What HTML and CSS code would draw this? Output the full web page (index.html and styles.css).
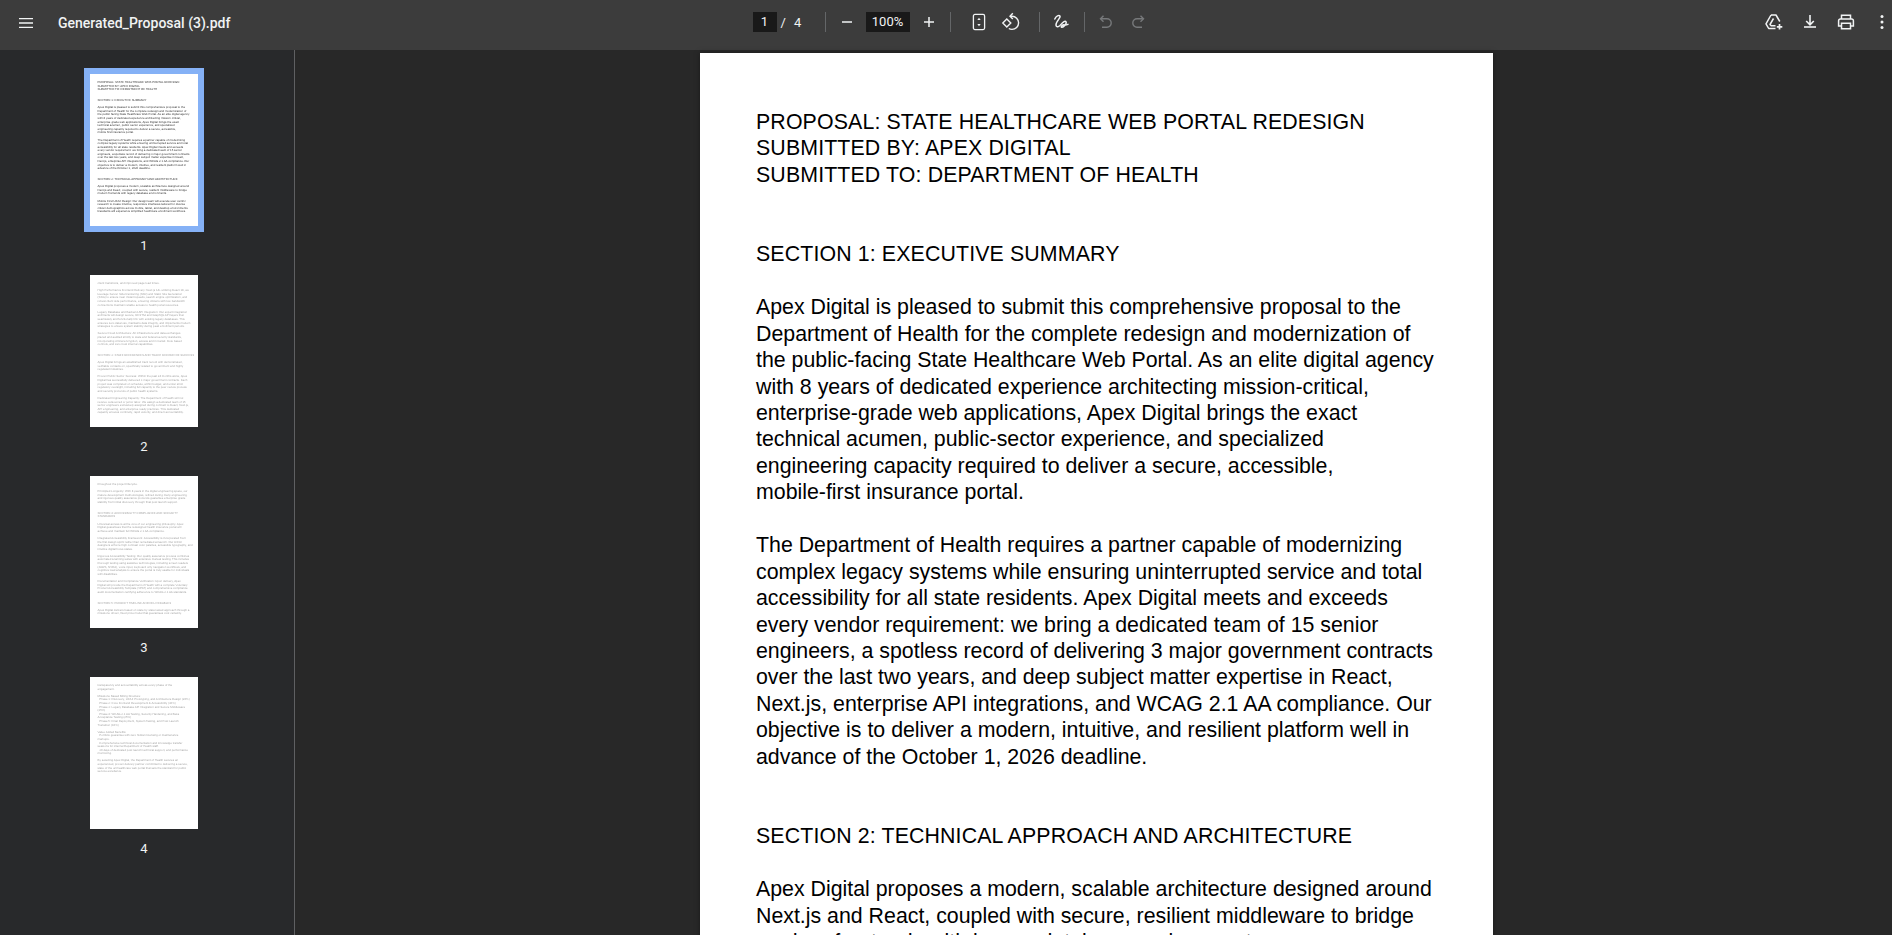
FILE: index.html
```html
<!DOCTYPE html>
<html lang="en">
<head>
  <meta charset="UTF-8">
  <meta name="viewport" content="width=device-width, initial-scale=1.0">
  <title>Generated_Proposal (3).pdf</title>
  <link rel="stylesheet" href="styles.css">
</head>
<body>
  <header class="toolbar">
    <div class="toolbar-left">
      <button class="icon-btn menu-btn" title="Menu">
        <svg width="16" height="16" viewBox="0 0 16 16"><path d="M1 3.600h14M1 8h14M1 12.400h14" stroke="#f1f3f4" stroke-width="1.300" fill="none"/></svg>
      </button>
      <span class="file-name">Generated_Proposal (3).pdf</span>
    </div>

    <div class="toolbar-center">
      <span class="num-box page-box">1</span>
      <span class="page-count"><span>/</span><span>4</span></span>
      <span class="sep"></span>
      <button class="icon-btn" title="Zoom out">
        <svg width="20" height="20" viewBox="0 0 20 20"><path d="M5 10h10" stroke="#f1f3f4" stroke-width="1.500"/></svg>
      </button>
      <span class="num-box zoom-box">100%</span>
      <button class="icon-btn" title="Zoom in">
        <svg width="20" height="20" viewBox="0 0 20 20"><path d="M5 10h10M10 5v10" stroke="#f1f3f4" stroke-width="1.500"/></svg>
      </button>
      <span class="sep"></span>
      <div class="view-group">
        <button class="icon-btn" title="Fit to page">
          <svg width="20" height="20" viewBox="0 0 20 20" fill="none" stroke="#f1f3f4" stroke-width="1.300"><rect x="4.400" y="2.400" width="11.200" height="15.200" rx="1.500"/><path d="M10 5.800l1.700 2.200H8.300zM10 14.200l1.700-2.200H8.300z" fill="#f1f3f4" stroke="none"/></svg>
        </button>
        <button class="icon-btn" title="Rotate">
          <svg width="20" height="20" viewBox="0 0 20 20" fill="none" stroke="#f1f3f4" stroke-width="1.400"><path d="M5.800 7L1.800 11l4 4 4-4z"/><path d="M9 4.200h2a6.600 6.600 0 0 1 0 13.200c-1.200 0-2.300-.3-3.200-.9"/><path d="M11.800 1.300L9 4.200l2.800 2.900"/></svg>
        </button>
      </div>
      <span class="sep"></span>
      <button class="icon-btn annotate-btn" title="Annotate">
        <svg width="20" height="20" viewBox="0 0 20 20" fill="none" stroke="#f1f3f4" stroke-width="1.500" stroke-linecap="round" stroke-linejoin="round"><path d="M3.800 7C5 4 8 2.500 9 4.200 10 6 4.600 9.500 5 13.200c.3 2.500 3 1.800 5-.8 1.500-2 4-4 5-2.600 1 1.500-2.500 6-4.300 5.500-1.500-.5 1-3 2.800-2.300.8.300 1.700.2 3.500-.6"/></svg>
      </button>
      <span class="sep"></span>
      <button class="icon-btn" title="Undo">
        <svg width="20" height="20" viewBox="0 0 20 20" fill="none" stroke="#77797b" stroke-width="1.400"><path d="M7.500 3.800L4.500 6.800l3 3"/><path d="M4.700 6.800h6.300a3.700 3.700 0 0 1 0 8.400H6"/></svg>
      </button>
      <button class="icon-btn" title="Redo">
        <svg width="20" height="20" viewBox="0 0 20 20" fill="none" stroke="#77797b" stroke-width="1.400"><path d="M12.500 3.800l3 3-3 3"/><path d="M15.300 6.800H9a3.700 3.700 0 0 0 0 8.400h5"/></svg>
      </button>
    </div>

    <div class="toolbar-right">
      <button class="icon-btn right-btn" title="Add to Drive">
        <svg width="20" height="20" viewBox="0 0 20 20" fill="none" stroke="#f1f3f4" stroke-width="1.500" stroke-linejoin="round"><path d="M7 3h5l3.800 6.500M7 3L2 11.800l2.700 4.700h6.800"/><path d="M9.500 6.500L6 12.500l1.200 1.300h4.300"/><path d="M15.500 12v5.500M12.800 14.800h5.500" stroke-width="1.700"/></svg>
      </button>
      <button class="icon-btn right-btn" title="Download">
        <svg width="20" height="20" viewBox="0 0 20 20" fill="none" stroke="#f1f3f4" stroke-width="1.600"><path d="M10 3v9.800M6.200 9l3.800 3.800L13.800 9"/><path d="M4 15h12"/></svg>
      </button>
      <button class="icon-btn right-btn" title="Print">
        <svg width="20" height="20" viewBox="0 0 20 20" fill="none" stroke="#f1f3f4" stroke-width="1.500"><path d="M5.500 7V3.200h9V7"/><path d="M5.500 14H2.600V8.700a1.700 1.700 0 0 1 1.700-1.700h11.400a1.700 1.700 0 0 1 1.700 1.700V14h-2.900"/><path d="M5.500 11.300h9v5.400h-9z"/></svg>
      </button>
      <button class="icon-btn more-btn" title="More">
        <svg width="20" height="20" viewBox="0 0 20 20" fill="#f1f3f4"><circle cx="10" cy="4.500" r="1.500"/><circle cx="10" cy="10" r="1.500"/><circle cx="10" cy="15.500" r="1.500"/></svg>
      </button>
    </div>
  </header>

  <div class="content">
    <aside class="sidebar">
      <div class="thumb-item">
        <div class="thumb selected">
          <div class="thumb-text">
            <p>PROPOSAL: STATE HEALTHCARE WEB PORTAL REDESIGN<br>SUBMITTED BY: APEX DIGITAL<br>SUBMITTED TO: DEPARTMENT OF HEALTH</p>
            <p class="gap-2">SECTION 1: EXECUTIVE SUMMARY</p>
            <p class="gap-1">Apex Digital is pleased to submit this comprehensive proposal to the<br>Department of Health for the complete redesign and modernization of<br>the public-facing State Healthcare Web Portal. As an elite digital agency<br>with 8 years of dedicated experience architecting mission-critical,<br>enterprise-grade web applications, Apex Digital brings the exact<br>technical acumen, public-sector experience, and specialized<br>engineering capacity required to deliver a secure, accessible,<br>mobile-first insurance portal.</p>
            <p class="gap-1">The Department of Health requires a partner capable of modernizing<br>complex legacy systems while ensuring uninterrupted service and total<br>accessibility for all state residents. Apex Digital meets and exceeds<br>every vendor requirement: we bring a dedicated team of 15 senior<br>engineers, a spotless record of delivering 3 major government contracts<br>over the last two years, and deep subject matter expertise in React,<br>Next.js, enterprise API integrations, and WCAG 2.1 AA compliance. Our<br>objective is to deliver a modern, intuitive, and resilient platform well in<br>advance of the October 1, 2026 deadline.</p>
            <p class="gap-2">SECTION 2: TECHNICAL APPROACH AND ARCHITECTURE</p>
            <p class="gap-1">Apex Digital proposes a modern, scalable architecture designed around<br>Next.js and React, coupled with secure, resilient middleware to bridge<br>modern frontends with legacy database environments.</p>
            <p class="gap-1">Mobile-First UX/UI Design: Our design team will execute user-centric<br>research to create intuitive, responsive interfaces tailored for diverse<br>citizen demographics across mobile, tablet, and desktop environments.<br>Residents will experience simplified healthcare enrollment workflows.</p>
          </div>
        </div>
        <div class="thumb-num">1</div>
      </div>

      <div class="thumb-item">
        <div class="thumb">
          <div class="thumb-text">
            <p>client transitions, and improved page load times.</p>
            <p class="gap-1">High-Performance Frontend Delivery: Next.js 14+ utilizing React 18, we<br>leverage Server-Side Rendering (SSR) and Static Site Generation<br>(SSG) to ensure near-instant speeds, search engine optimization, and<br>robust client-side performance, ensuring citizens with low-bandwidth<br>connections maintain reliable access to health portal resources.</p>
            <p class="gap-1">Legacy Database and Backend API Integration: Our expert integration<br>architects will design secure, RESTful and GraphQL API layers that<br>seamlessly and functionally link with existing legacy databases. This<br>ensures zero data loss, maintains data integrity, and implements modern<br>strategies to ensure system stability during peak enrollment periods.</p>
            <p class="gap-1">Secure Cloud Architecture: All infrastructure and data exchanges<br>placed and audited strictly to state and federal security standards,<br>incorporating critical encryption, access and in transit. Role-based<br>controls, and zero-trust internal capabilities.</p>
            <p class="gap-2">SECTION 3: STAFF REFERENCES AND TRACK RECORD OF SUCCESS</p>
            <p class="gap-1">Apex Digital brings an established track record with demonstrated,<br>verifiable contacts on, specifically related to government and highly<br>regulated industries.</p>
            <p class="gap-1">Proven Public Sector Success: Within the past 24 months alone, Apex<br>Digital has successfully delivered 3 major government contracts. Each<br>project was completed on schedule, within budget, and under strict<br>regulatory oversight, including full capacity to the peer-review process<br>and security protocols of public health systems.</p>
            <p class="gap-1">Dedicated Engineering Capacity: The Department of Health will not<br>receive outsourced or junior labor. We assign a dedicated team of 15<br>senior engineers exclusively assigned during contract to React, Next.js,<br>API engineering, and enterprise-ready practices. This dedicated<br>capacity ensures continuity, rapid velocity, and direct accountability.</p>
          </div>
        </div>
        <div class="thumb-num">2</div>
      </div>

      <div class="thumb-item">
        <div class="thumb">
          <div class="thumb-text">
            <p>throughout the project lifecycle.</p>
            <p class="gap-1">Principled Longevity: With 8 years in the digital engineering space, our<br>mature development methodologies, refined during many engineering,<br>and rigorous quality assurance protocols guarantee enterprise-grade<br>stability from initial discovery through final post-launch support.</p>
            <p class="gap-2">SECTION 4: ACCESSIBILITY COMPLIANCE AND SECURITY<br>STANDARDS</p>
            <p class="gap-1">Universal access is at the core of our engineering philosophy. Apex<br>Digital guarantees that the redesigned health insurance portal will<br>achieve and maintain full WCAG 2.1 AA compliance.</p>
            <p class="gap-1">Integrated Accessibility Framework: Accessibility is incorporated from<br>the first design sprint rather than remediated at launch. Our UX/UI<br>designers enforce high-contrast color palettes, accessible typography, and<br>intuitive digital focus states.</p>
            <p class="gap-1">Rigorous Accessibility Testing: Our quality assurance process combines<br>automated scanning suites with extensive manual testing. This includes<br>thorough testing using assistive technologies, including screen readers<br>(JAWS, NVDA), voice input, keyboard-only navigation workflows, and<br>cognitive load analysis to ensure the portal is truly usable for individuals<br>with disabilities.</p>
            <p class="gap-1">Documentation and Compliance Verification: Upon delivery, Apex<br>Digital will provide the Department of Health with a complete Voluntary<br>Product Accessibility Template (VPAT) and comprehensive compliance<br>audit documentation certifying adherence to WCAG 2.1 AA standards.</p>
            <p class="gap-2">SECTION 5: PROJECT TIMELINE AND DELIVERABLES</p>
            <p class="gap-1">Apex Digital delivers based on state-by-state tested approach through a<br>milestone-driven, fixed-price model that guarantees cost certainty.</p>
          </div>
        </div>
        <div class="thumb-num">3</div>
      </div>

      <div class="thumb-item">
        <div class="thumb">
          <div class="thumb-text">
            <p>transparency and accountability across every phase of the<br>engagement.</p>
            <p class="gap-1">Milestone-Based Billing Structure:<br>- Phase 1: Discovery, UX/UI Prototyping, and Architecture Design (20%)<br>- Phase 2: Core Frontend Development &amp; Accessibility (30%)<br>- Phase 3: Legacy Database API Integration and Secure Middleware<br>(25%)<br>- Phase 4: WCAG 2.1 AA Testing, Security Hardening, and Beta<br>Acceptance Testing (25%)<br>- Phase 5: Final Deployment, System Testing, and Post-Launch<br>Transition (10%)</p>
            <p class="gap-1">Value-Added Benefits:<br>- Portfolio guarantee with zero hidden licensing or maintenance<br>markups.<br>- Comprehensive technical documentation and knowledge transfer<br>sessions for internal Department of Health staff.<br>- 30 days of dedicated post-launch technical support, and performance<br>monitoring.</p>
            <p class="gap-1">By selecting Apex Digital, the Department of Health secures an<br>experienced, proven delivery partner committed to delivering a secure,<br>state-of-the-art healthcare web portal that sets the standard for public<br>service excellence.</p>
          </div>
        </div>
        <div class="thumb-num">4</div>
      </div>
    </aside>

    <main class="viewer">
      <article class="page">
        <p class="caps">PROPOSAL: STATE HEALTHCARE WEB PORTAL REDESIGN<br>SUBMITTED BY: APEX DIGITAL<br>SUBMITTED TO: DEPARTMENT OF HEALTH</p>
        <p class="gap-2 caps">SECTION 1: EXECUTIVE SUMMARY</p>
        <p class="gap-1">Apex Digital is pleased to submit this comprehensive proposal to the<br>Department of Health for the complete redesign and modernization of<br>the public-facing State Healthcare Web Portal. As an elite digital agency<br>with 8 years of dedicated experience architecting mission-critical,<br>enterprise-grade web applications, Apex Digital brings the exact<br>technical acumen, public-sector experience, and specialized<br>engineering capacity required to deliver a secure, accessible,<br>mobile-first insurance portal.</p>
        <p class="gap-1">The Department of Health requires a partner capable of modernizing<br>complex legacy systems while ensuring uninterrupted service and total<br>accessibility for all state residents. Apex Digital meets and exceeds<br>every vendor requirement: we bring a dedicated team of 15 senior<br>engineers, a spotless record of delivering 3 major government contracts<br>over the last two years, and deep subject matter expertise in React,<br>Next.js, enterprise API integrations, and WCAG 2.1 AA compliance. Our<br>objective is to deliver a modern, intuitive, and resilient platform well in<br>advance of the October 1, 2026 deadline.</p>
        <p class="gap-2 caps">SECTION 2: TECHNICAL APPROACH AND ARCHITECTURE</p>
        <p class="gap-1">Apex Digital proposes a modern, scalable architecture designed around<br>Next.js and React, coupled with secure, resilient middleware to bridge<br>modern frontends with legacy database environments.</p>
      </article>
    </main>
  </div>
</body>
</html>
```

FILE: styles.css
```css
* {
  box-sizing: border-box;
}

body {
  margin: 0;
  height: 100vh;
  overflow: hidden;
  display: flex;
  flex-direction: column;
  background-color: #282828;
  color: #f1f3f4;
  font-family: Roboto, "Liberation Sans", sans-serif;
}

p {
  margin: 0;
}

/* top bar */
.toolbar {
  flex: none;
  height: 50px;
  display: grid;
  grid-template-columns: 1fr auto 1fr;
  align-items: center;
  background-color: #3c3c3c;
}

.toolbar-left,
.toolbar-center,
.toolbar-right {
  display: flex;
  align-items: center;
}

.toolbar-left {
  padding-left: 10px;
}

.toolbar-center {
  padding-left: 14px;
  margin-top: -6px;
}

.toolbar-right {
  justify-content: flex-end;
  margin-top: -6px;
}

.icon-btn {
  width: 32px;
  height: 32px;
  padding: 0;
  border: none;
  background: none;
  display: flex;
  align-items: center;
  justify-content: center;
}

.menu-btn {
  margin-top: -5px;
}

.file-name {
  margin-left: 16px;
  margin-top: -5px;
  font-size: 14px;
  font-weight: 500;
}

.num-box {
  height: 20px;
  line-height: 20px;
  text-align: center;
  font-size: 13px;
  background-color: #191919;
}

.page-box {
  width: 24px;
}

.zoom-box {
  width: 44px;
  margin: 0 3px;
}

.page-count {
  width: 43px;
  display: flex;
  gap: 8px;
  padding-left: 4px;
  font-size: 13px;
}

.sep {
  width: 1px;
  height: 20px;
  margin: 0 5px;
  background-color: #646668;
}

.view-group {
  display: flex;
  margin: 0 7px;
}

.annotate-btn {
  margin-right: 2px;
}

.right-btn {
  width: 36px;
}

.more-btn {
  width: 20px;
  margin-left: 8px;
}

/* main area */
.content {
  flex: 1;
  min-height: 0;
  display: flex;
}

.sidebar {
  flex: none;
  width: 295px;
  padding: 24px 6px 0 0;
  display: flex;
  flex-direction: column;
  gap: 21px;
  background-color: #28292b;
  border-right: 1px solid #5f6062;
}

.thumb-item {
  display: flex;
  flex-direction: column;
  align-items: center;
}

.thumb {
  width: 108px;
  height: 152px;
  background-color: #fff;
  overflow: hidden;
}

.thumb.selected {
  outline: 6px solid #85b1f6;
}

.thumb-text {
  padding: 7px 0 0 7.600px;
  font-family: "Liberation Sans", Arial, sans-serif;
  font-size: 2.900px;
  line-height: 3.600px;
  white-space: nowrap;
  text-rendering: geometricPrecision;
  color: #000;
  opacity: 0.38;
  filter: blur(0.3px);
}

.selected .thumb-text {
  opacity: 0.8;
}

.thumb-num {
  margin-top: 12px;
  line-height: 16px;
  font-size: 13px;
}

.viewer {
  flex: 1;
  min-width: 0;
  padding: 3px 0 0 6px;
  display: flex;
  justify-content: center;
}

.page {
  width: 793px;
  height: 1122px;
  flex: none;
  padding: 56px 0 0 56px;
  background-color: #fff;
  color: #000;
  font-family: "Liberation Sans", Arial, sans-serif;
  font-size: 21.330px;
  line-height: 26.450px;
  white-space: nowrap;
  box-shadow: 0 0 6px rgba(0, 0, 0, 0.35);
}

.caps {
  letter-spacing: 0.130px;
}

.gap-1 {
  margin-top: 1lh;
}

.gap-2 {
  margin-top: 2lh;
}
```
